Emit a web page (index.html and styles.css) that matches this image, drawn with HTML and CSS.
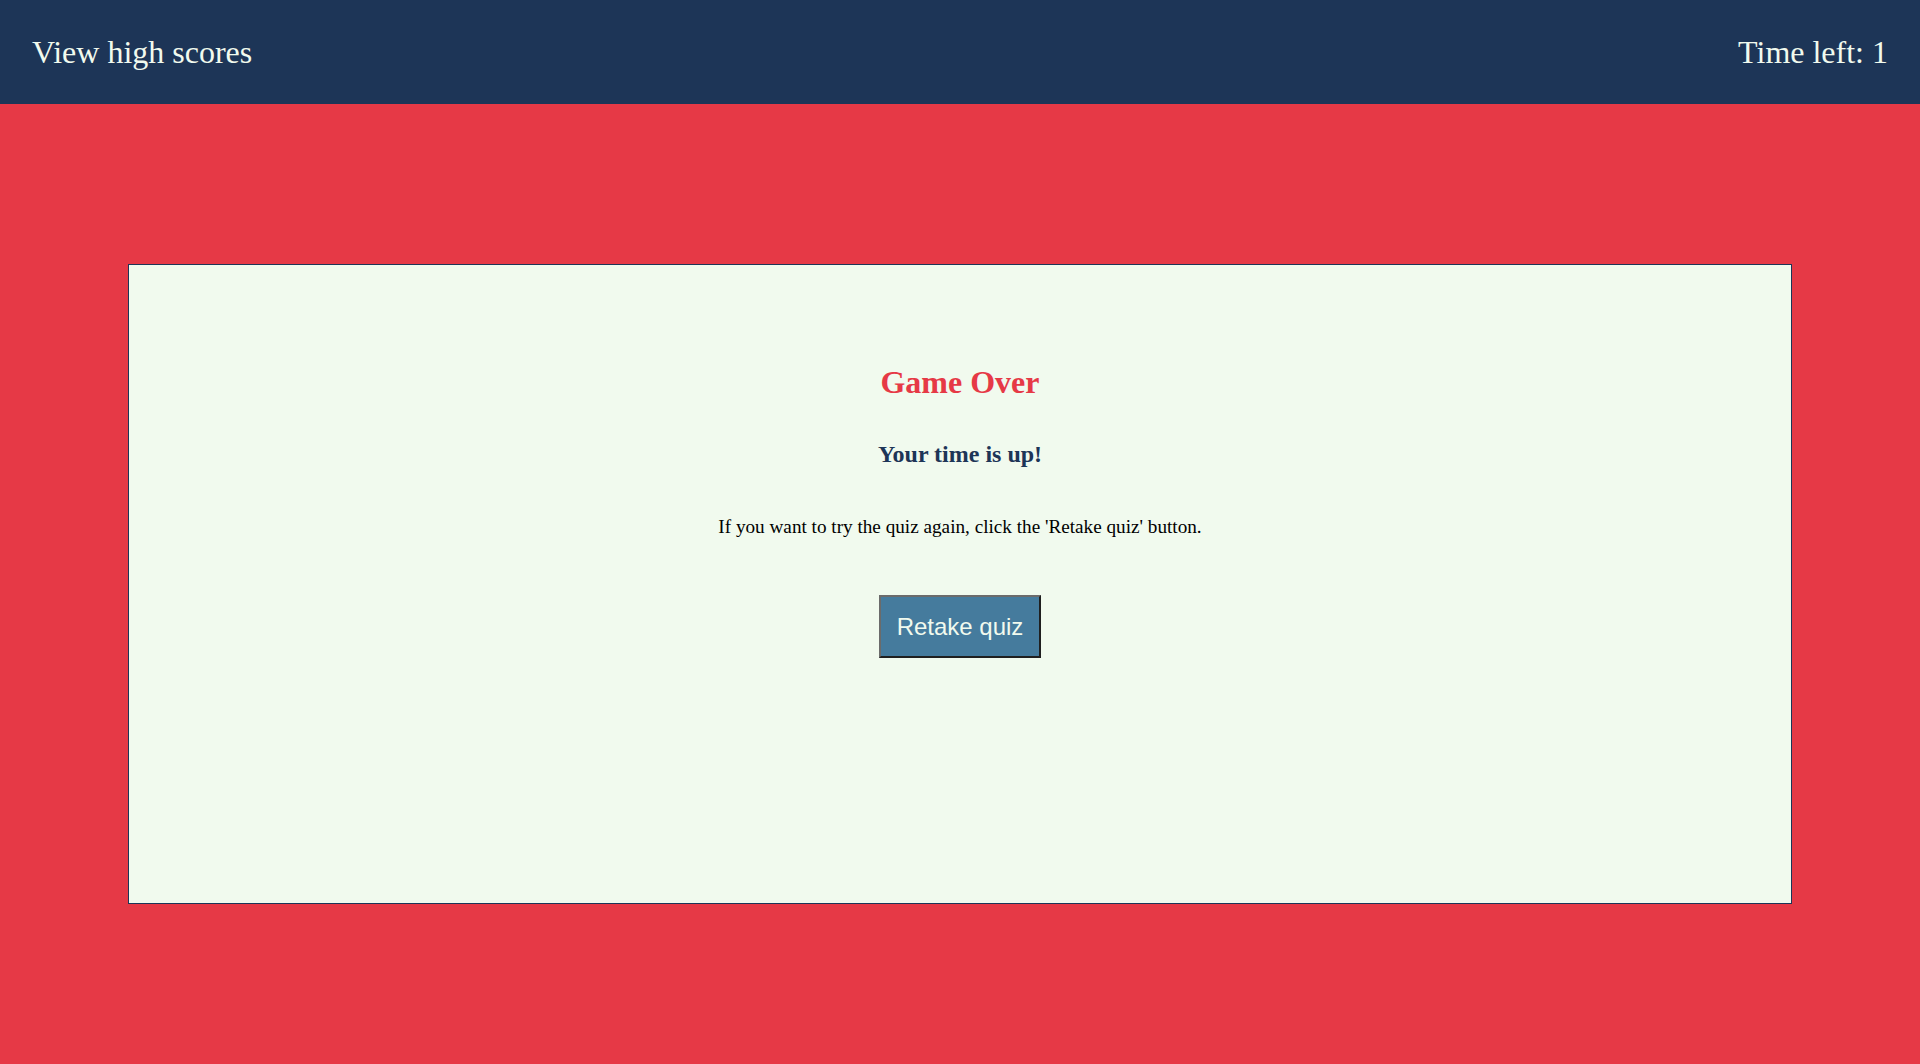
FILE: index.html
```html
<!DOCTYPE html>
<html lang="en">
<head>
<meta charset="utf-8">
<title>Quiz - Game Over</title>
<link rel="stylesheet" href="styles.css">
</head>
<body>
<header class="topbar">
  <a class="topbar-link" href="#">View high scores</a>
  <div class="timer">Time left: <span class="timer-value">1</span></div>
</header>
<main class="stage">
  <section class="card">
    <h1 class="card-title">Game Over</h1>
    <h2 class="card-subtitle">Your time is up!</h2>
    <p class="card-text">If you want to try the quiz again, click the 'Retake quiz' button.</p>
    <button class="retake-btn" type="button">Retake quiz</button>
  </section>
</main>
</body>
</html>
```
FILE: styles.css
```css
html, body {
  margin: 0;
  padding: 0;
}

body {
  font-family: "Liberation Serif", "Times New Roman", serif;
  background: #e63946;
  height: 1064px;
  overflow: hidden;
}

.topbar {
  height: 104px;
  box-sizing: border-box;
  padding: 0 32px;
  background: #1d3557;
  display: flex;
  align-items: center;
  justify-content: space-between;
  color: #f1faee;
  font-size: 32px;
  line-height: 1.15;
}

.topbar-link {
  color: #f1faee;
  text-decoration: none;
}

.timer {
  color: #f1faee;
}

.stage {
  padding: 160px 128px;
}

.card {
  height: 640px;
  box-sizing: border-box;
  border: 1px solid #1d3557;
  background: #f1faee;
  padding-top: 99px;
  display: flex;
  flex-direction: column;
  align-items: center;
  text-align: center;
}

.card-title {
  margin: 0;
  font-size: 32px;
  line-height: 36.8px;
  font-weight: bold;
  color: #e63946;
}

.card-subtitle {
  margin: 40px 0 0;
  font-size: 24px;
  line-height: 27.6px;
  font-weight: bold;
  color: #1d3557;
}

.card-text {
  margin: 47.5px 0 0;
  font-size: 19.2px;
  line-height: 22px;
  color: #000;
}

.retake-btn {
  margin-top: 57px;
  font-family: "Liberation Sans", Arial, sans-serif;
  font-size: 24px;
  line-height: 27.6px;
  padding: 16px 16px;
  background: #457b9d;
  color: #f1faee;
  border-style: solid;
  border-width: 2px;
  border-color: #6b6b6b #1f1f1f #1f1f1f #6b6b6b;
  border-radius: 0;
  cursor: pointer;
}
```
